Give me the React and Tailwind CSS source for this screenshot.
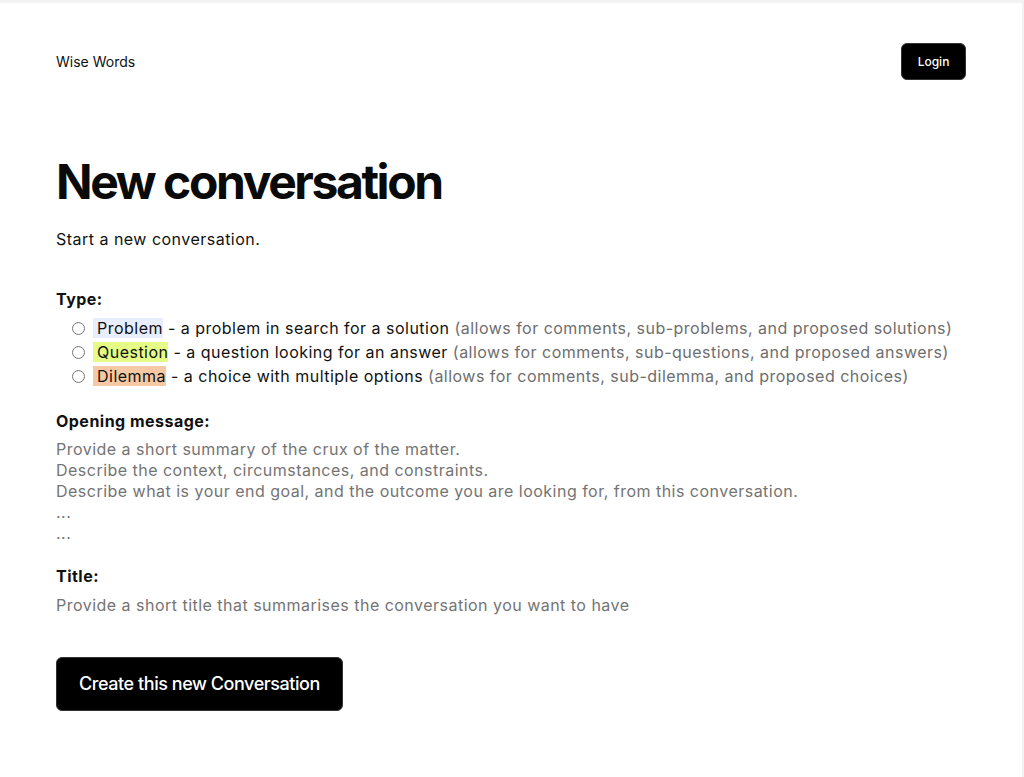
import React from "react";

const types = [
  {
    name: "Problem",
    bg: "bg-[#e8eefd]",
    desc: "a problem in search for a solution",
    note: "(allows for comments, sub-problems, and proposed solutions)",
  },
  {
    name: "Question",
    bg: "bg-[#e5fd86]",
    desc: "a question looking for an answer",
    note: "(allows for comments, sub-questions, and proposed answers)",
  },
  {
    name: "Dilemma",
    bg: "bg-[#f7c8a4]",
    desc: "a choice with multiple options",
    note: "(allows for comments, sub-dilemma, and proposed choices)",
  },
];

const openingLines = [
  "Provide a short summary of the crux of the matter.",
  "Describe the context, circumstances, and constraints.",
  "Describe what is your end goal, and the outcome you are looking for, from this conversation.",
  "...",
  "...",
];

export default function App() {
  return (
    <div className="min-h-[777px] bg-white border-t-[3px] border-r-2 border-[#f3f3f3] text-[#111] font-['Inter',sans-serif]">
      <header className="flex items-center justify-between pt-10 pl-14 pr-[56px]">
        <span className="text-sm">Wise Words</span>
        <button className="h-[37px] w-[65px] rounded-md bg-black border border-[#333] text-white text-xs font-medium">
          Login
        </button>
      </header>

      <main className="px-14 tracking-[0.03em]">
        <h1 className="mt-[78px] text-5xl leading-none font-bold tracking-tighter text-[#0a0a0a]">
          New conversation
        </h1>
        <p className="mt-[21px] leading-6">Start a new conversation.</p>

        <section className="mt-9">
          <h2 className="font-bold leading-6">Type:</h2>
          <div className="mt-[5px] flex flex-col">
            {types.map((t) => (
              <label key={t.name} className="flex items-center h-6 whitespace-nowrap">
                <input type="radio" name="type" className="m-0 ml-4 mr-2 w-[13px] h-[13px]" />
                <span>
                  <span className={"pl-1 " + t.bg}>{t.name}</span>
                  {" - " + t.desc + " "}
                  <span className="text-[#6e6e6e]">{t.note}</span>
                </span>
              </label>
            ))}
          </div>
        </section>

        <section className="mt-[21px]">
          <h2 className="font-bold leading-6">Opening message:</h2>
          <div className="mt-[6px] text-[#747474] leading-[21px]">
            {openingLines.map((l, i) => (
              <div key={i}>{l}</div>
            ))}
          </div>
        </section>

        <section className="mt-5">
          <h2 className="font-bold leading-6">Title:</h2>
          <div className="mt-[5px] text-[#747474] leading-6">
            Provide a short title that summarises the conversation you want to have
          </div>
        </section>

        <button className="mt-10 h-[54px] w-[287px] rounded-md bg-black border border-[#333] text-white text-lg font-medium tracking-tight">
          Create this new Conversation
        </button>
      </main>
    </div>
  );
}
